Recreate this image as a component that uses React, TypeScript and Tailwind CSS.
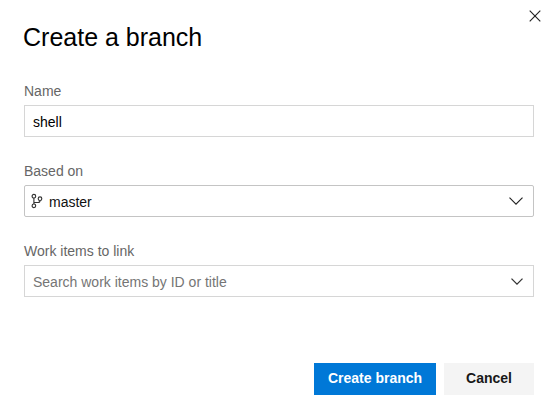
export default function App() {
  return (
    <main className="flex h-[420px] w-[559px] flex-col bg-white px-6 font-['Liberation_Sans',Arial,sans-serif] text-sm text-black">
      <header className="flex h-[83px] justify-between">
        <h1 className="-ml-px pt-[19px] text-[25px] leading-9">Create a branch</h1>
        <button aria-label="Close" className="-mr-[6px] mt-[10px] h-3 w-3">
          <svg viewBox="0 0 12 12" className="size-3" fill="none" stroke="#222" strokeWidth="1.15"><path d="m.7.7 10.6 10.6M11.3.7.7 11.3" /></svg>
        </button>
      </header>
      <form className="flex w-[510px] flex-col gap-[26px]">
        <label className="flex h-[54px] flex-col text-[#666]">
          <span className="h-[22px] leading-4">Name</span>
          <input className="h-8 border border-[#d6d6d6] px-2 pt-0.5 text-black outline-none" defaultValue="shell" />
        </label>
        <div className="flex h-[54px] flex-col text-[#666]">
          <span className="h-[22px] leading-4">Based on</span>
          <button type="button" className="flex h-8 items-center rounded-[2px] border border-[#c4c4c4] pl-[6px] pr-[10px] text-[#111]">
            <svg viewBox="0 0 12 16" className="mr-[6px] h-4 w-3" fill="none" stroke="#333" strokeWidth="1.15">
              <circle cx="2.9" cy="3.2" r="1.8" />
              <circle cx="2.9" cy="12.8" r="1.8" />
              <circle cx="9" cy="5.7" r="1.8" />
              <path d="M2.9 5v6M9 7.5q0 2-2 2H2.9" />
            </svg>
            <span className="flex-1 pt-0.5 text-left">master</span>
            <svg viewBox="0 0 14 8" className="h-2 w-[14px]" fill="none" stroke="#222" strokeWidth="1.15"><path d="m.5.6 6.5 6.5L13.5.6" /></svg>
          </button>
        </div>
        <div className="flex h-[54px] flex-col text-[#666]">
          <span className="h-[22px] leading-4">Work items to link</span>
          <div className="flex h-8 items-center border border-[#d6d6d6] pl-2 pr-[10px]">
            <input className="min-w-0 flex-1 pt-0.5 outline-none placeholder:text-[#757575]" placeholder="Search work items by ID or title" />
            <svg viewBox="0 0 12 7" className="mt-px h-[7px] w-3" fill="none" stroke="#333" strokeWidth="1.3"><path d="m.5.6 5.5 5.5L11.5.6" /></svg>
          </div>
        </div>
      </form>
      <footer className="mt-auto mb-[25px] flex w-[510px] justify-end gap-2 font-bold">
        <button className="h-8 w-[122px] bg-[#0078d7] pb-0.5 text-white">Create branch</button>
        <button className="h-8 w-[90px] bg-[#f4f4f4] pb-0.5 text-[#181818]">Cancel</button>
      </footer>
    </main>
  );
}
